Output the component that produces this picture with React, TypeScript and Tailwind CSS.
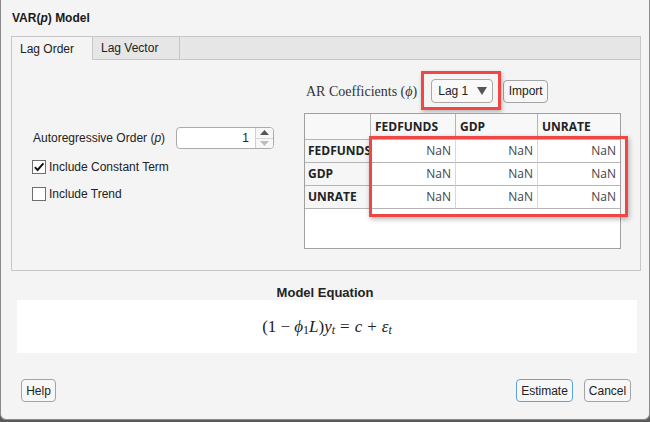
import React from "react";

const sans = { fontFamily: '"Liberation Sans", Arial, sans-serif' };
const tableFont = { fontFamily: '"Open Sans", "Noto Sans", sans-serif' };
const serif = { fontFamily: '"Liberation Serif", "Times New Roman", serif' };

function Checkbox({ checked, label }: { checked: boolean; label: string }) {
  return (
    <div className="flex items-center h-[16px]">
      <div className="w-[14px] h-[14px] border border-[#6e6e6e] bg-white flex items-center justify-center">
        {checked && (
          <svg width="12" height="12" viewBox="0 0 12 12">
            <path d="M1.8 6.2 L4.6 9 L10.4 2.4" fill="none" stroke="#111" strokeWidth="1.9" />
          </svg>
        )}
      </div>
      <span className="ml-[3px] text-[12px] text-[#222]">{label}</span>
    </div>
  );
}

function Btn({ children, w, blue }: { children: React.ReactNode; w: string; blue?: boolean }) {
  return (
    <div
      className={`h-[23px] ${w} rounded-[4px] border ${blue ? "border-[#5da2e0]" : "border-[#a3a3a3]"} bg-[#f7f7f7] flex items-center justify-center text-[12px] text-[#222]`}
    >
      {children}
    </div>
  );
}

const cols = ["FEDFUNDS", "GDP", "UNRATE"];

export default function App() {
  return (
    <div className="w-[650px] h-[422px] bg-[#5a5a5a]" style={sans}>
      <div className="w-[650px] h-[420px] bg-[#f4f4f4] border-l border-r border-b border-[#8a8a8a] rounded-b-[6px] flex flex-col">
        {/* title */}
        <div className="h-[36px] flex items-center pl-[11px] text-[12px] font-bold text-[#1a1a1a]">
          VAR(<span className="italic">p</span>) Model
        </div>

        {/* tabs */}
        <div className="ml-[10px] mr-[8px] flex h-[24px]">
          <div className="w-[82px] border-l border-t border-r border-[#c8c8c8] bg-[#f4f4f4] flex items-center pl-[8px] text-[12px] text-[#222]">
            Lag Order
          </div>
          <div className="w-[87px] border-t border-r border-b border-[#c8c8c8] bg-[#e6e6e6] flex items-center pl-[8px] text-[12px] text-[#222]">
            Lag Vector
          </div>
          <div className="flex-1 border-t border-r border-b border-[#c8c8c8] bg-[#e6e6e6]" />
        </div>

        {/* panel */}
        <div className="ml-[10px] mr-[8px] h-[211px] border-l border-r border-b border-[#c8c8c8] bg-[#f4f4f4] flex">
          {/* left column */}
          <div className="w-[292px] pt-[67px] pl-[21px] flex flex-col">
            <div className="flex items-center h-[22px]">
              <div className="w-[143px] text-[12px] text-[#222]">
                Autoregressive Order (<span className="italic">p</span>)
              </div>
              <div className="w-[98px] h-[22px] border border-[#ababab] rounded-[4px] bg-white flex overflow-hidden">
                <div className="flex-1 flex items-center justify-end pr-[6px] text-[12px] text-[#222]">1</div>
                <div className="w-[18px] border-l border-[#d0d0d0] bg-[#f7f7f7] flex flex-col">
                  <div className="flex-1 flex items-center justify-center border-b border-[#d6d6d6]">
                    <svg width="9" height="5" viewBox="0 0 9 5">
                      <path d="M0 5 L4.5 0 L9 5 Z" fill="#555" />
                    </svg>
                  </div>
                  <div className="flex-1 flex items-center justify-center">
                    <svg width="9" height="5" viewBox="0 0 9 5">
                      <path d="M0 0 L4.5 5 L9 0 Z" fill="#bdbdbd" />
                    </svg>
                  </div>
                </div>
              </div>
            </div>
            <div className="mt-[10px] -ml-[1px]">
              <Checkbox checked label="Include Constant Term" />
            </div>
            <div className="mt-[11px] -ml-[1px]">
              <Checkbox checked={false} label="Include Trend" />
            </div>
          </div>

          {/* right column */}
          <div className="flex flex-col pt-[19px]">
            <div className="flex items-center h-[24px]">
              <div className="pl-[2px] text-[14px] text-[#333] whitespace-nowrap" style={serif}>
                AR Coefficients (<span className="italic">ϕ</span>)
              </div>
              <div className="relative ml-[14px]">
                <div className="w-[62px] h-[24px] border border-[#a8a8a8] rounded-[4px] bg-[#f9f9f9] flex items-center justify-between pl-[6px] pr-[5px] text-[12px] text-[#222] whitespace-nowrap">
                  <span>Lag 1</span>
                  <svg width="10" height="8" viewBox="0 0 10 8">
                    <path d="M0 0 L10 0 L5 8 Z" fill="#555" />
                  </svg>
                </div>
                <div className="absolute left-[-10px] top-[-8px] w-[80px] h-[39px] border-[3px] border-[#ef4646] shadow-[1px_2px_4px_rgba(0,0,0,0.25)]" />
              </div>
              <div className="ml-[10px]">
                <Btn w="w-[45px]">Import</Btn>
              </div>
            </div>

            <div className="relative mt-[10px] w-[317px] h-[136px] border border-[#a0a0a0] bg-white" style={tableFont}>
              <div className="grid grid-cols-[66px_85px_82px_82px]">
                <div className="h-[26px] border-r border-b border-[#b4b4b4] bg-[#f8f8f8]" />
                {cols.map((c, i) => (
                  <div
                    key={c}
                    className={`h-[26px] ${i < 2 ? "border-r" : ""} border-b border-[#b4b4b4] bg-[#f8f8f8] flex items-center pl-[4px] text-[12px] font-bold text-[#222]`}
                  >
                    {c}
                  </div>
                ))}
                {cols.map((r) => (
                  <React.Fragment key={r}>
                    <div className="h-[23px] border-r border-b border-[#b4b4b4] bg-[#f6f6f6] flex items-center pl-[3px] text-[12px] font-bold text-[#222] overflow-hidden whitespace-nowrap">
                      {r}
                    </div>
                    {[0, 1, 2].map((i) => (
                      <div
                        key={i}
                        className={`h-[23px] ${i < 2 ? "border-r border-[#d8d8d8]" : ""} border-b border-b-[#b4b4b4] flex items-center justify-end pr-[4px] text-[12px] text-[#444]`}
                      >
                        NaN
                      </div>
                    ))}
                  </React.Fragment>
                ))}
              </div>
              <div className="absolute left-[64px] top-[22px] w-[259px] h-[81px] border-[3px] border-[#ef4646] shadow-[1px_2px_5px_rgba(0,0,0,0.3)]" />
            </div>
          </div>
        </div>

        {/* model equation */}
        <div className="pt-[14px] h-[29px] text-center text-[13px] leading-[15px] font-bold text-[#222]">
          Model Equation
        </div>
        <div className="ml-[16px] mr-[12px] h-[53px] bg-white flex items-center justify-center text-[17px] text-[#222] whitespace-nowrap" style={serif}>
          <span>(1 − </span>
          <span className="italic ml-[4px]">ϕ</span>
          <span className="text-[12px] relative top-[3px]">1</span>
          <span className="italic">L</span>
          <span>)</span>
          <span className="italic">y</span>
          <span className="italic text-[12px] relative top-[3px]">t</span>
          <span className="mx-[5px]">=</span>
          <span className="italic">c</span>
          <span className="mx-[5px]">+</span>
          <span className="italic">ε</span>
          <span className="italic text-[12px] relative top-[3px]">t</span>
        </div>

        {/* buttons */}
        <div className="mt-[26px] flex items-center pl-[20px] pr-[18px]">
          <Btn w="w-[35px]">Help</Btn>
          <div className="flex-1" />
          <Btn w="w-[57px]" blue>
            Estimate
          </Btn>
          <div className="ml-[11px]">
            <Btn w="w-[47px]">Cancel</Btn>
          </div>
        </div>
      </div>
    </div>
  );
}
